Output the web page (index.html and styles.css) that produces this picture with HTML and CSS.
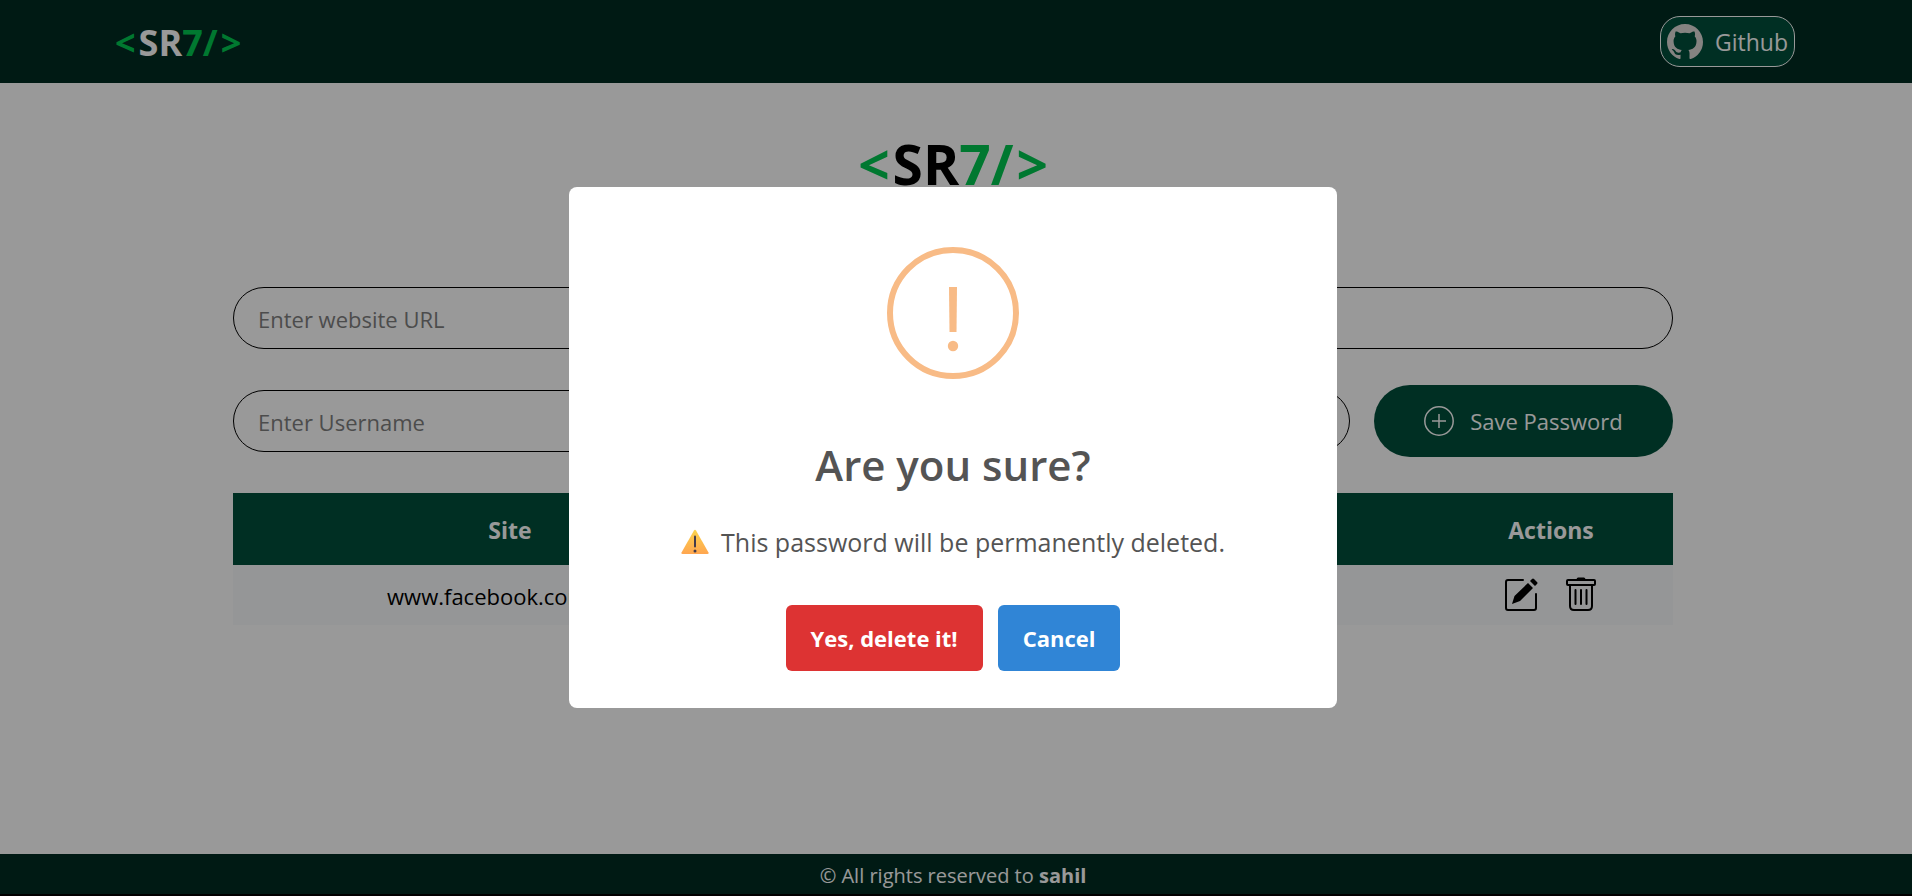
FILE: index.html
```html
<!DOCTYPE html>
<html lang="en">
<head>
<meta charset="utf-8">
<title>SR7 Password Manager</title>
<link rel="stylesheet" href="styles.css">
</head>
<body>
<nav class="nav">
  <div class="nav-inner">
    <div class="logo"><span class="green open">&lt;</span>SR<span class="green">7/</span><span class="green close">&gt;</span></div>
    <a class="github" href="#">
      <svg class="github-icon" viewBox="0 0 16 16" aria-hidden="true"><path fill="#dedad8" d="M8 0C3.580 0 0 3.580 0 8c0 3.540 2.290 6.530 5.470 7.590.4.070.55-.17.55-.38 0-.19-.01-.82-.01-1.490-2.010.37-2.530-.49-2.690-.94-.09-.23-.48-.94-.82-1.130-.28-.15-.68-.52-.01-.53.63-.01 1.080.58 1.230.82.72 1.210 1.870.87 2.330.66.070-.52.28-.87.51-1.070-1.780-.2-3.640-.89-3.640-3.950 0-.87.31-1.590.82-2.150-.08-.2-.36-1.020.08-2.120 0 0 .67-.21 2.200.82.64-.18 1.320-.27 2-.27s1.360.09 2 .27c1.530-1.040 2.200-.82 2.200-.82.44 1.100.16 1.920.08 2.120.51.56.82 1.270.82 2.150 0 3.070-1.870 3.750-3.650 3.950.29.25.54.73.54 1.480 0 1.070-.01 1.930-.01 2.200 0 .21.15.46.55.38A8.010 8.010 0 0 0 16 8c0-4.420-3.580-8-8-8z"/></svg>
      <span>Github</span>
    </a>
  </div>
</nav>
<main class="main">
  <div class="container">
  <h1 class="title"><span class="green open">&lt;</span>SR<span class="green">7/</span><span class="green close">&gt;</span></h1>
  <p class="subtitle">Your own Password Manager</p>
  <form class="form">
    <input class="field" type="text" placeholder="Enter website URL" aria-label="Website URL">
    <div class="form-row">
      <input class="field" type="text" placeholder="Enter Username" aria-label="Username">
      <input class="field" type="password" aria-label="Password">
      <button class="save" type="button">
        <svg class="plus-icon" viewBox="0 0 30 30" fill="none" stroke="currentColor" aria-hidden="true"><circle cx="15" cy="15" r="14.2" stroke-width="1.5"/><path stroke-width="1.5" d="M15 8v14M8 15h14"/></svg>
        <span>Save Password</span>
      </button>
    </div>
  </form>
  <table class="table">
    <thead>
      <tr><th class="col-site">Site</th><th>Username</th><th>Password</th><th class="col-actions">Actions</th></tr>
    </thead>
    <tbody>
      <tr>
        <td><div class="cell"><span>www.facebook.com</span><svg class="copy-icon" viewBox="0 0 24 24" fill="none" stroke="currentColor" stroke-width="2" aria-hidden="true"><rect x="8" y="8" width="13" height="13" rx="2"/><path d="M16 8V3H3v13h5"/></svg></div></td>
        <td>sahil</td>
        <td>••••••••</td>
        <td><div class="actions">
          <button class="icon-button" type="button" aria-label="Edit"><svg class="icon" viewBox="0 0 36 36" aria-hidden="true"><path fill="none" stroke="#000" stroke-width="2" stroke-linecap="round" d="M20 4H5q-2 0-2 2v26q0 2 2 2h26q2 0 2-2V18"/><path d="m9 28 2.500-8L25 7l5 5-13 13zM27 5l2-2q1-1 2 0l3 3q1 1 0 2l-2 2z"/></svg></button>
          <button class="icon-button" type="button" aria-label="Delete"><svg class="icon" viewBox="0 0 36 36" fill="none" stroke="#000" stroke-width="2" stroke-linecap="round" stroke-linejoin="round" aria-hidden="true"><rect x="4" y="4" width="28" height="5" rx="1"/><path fill="#000" d="M15 2.500h6L22 4h-8z"/><path d="M7 9v21q0 4 4 4h14q4 0 4-4V9M12.500 14v14M18 14v14M23.500 14v14"/></svg></button>
        </div></td>
      </tr>
    </tbody>
  </table>
  </div>
</main>
<footer class="footer"><p>© All rights reserved to <b>sahil</b></p></footer>
<div class="overlay">
  <div class="modal" role="dialog" aria-modal="true" aria-labelledby="dialog-title">
    <svg class="warn" viewBox="0 0 132 132" aria-hidden="true"><circle cx="66" cy="66" r="63" fill="none" stroke="#f8bb86" stroke-width="6"/><path fill="#f8bb86" d="M62 40h8l-.5 45h-7z"/><circle cx="66" cy="99" r="5.200" fill="#f8bb86"/></svg>
    <h2 class="modal-title" id="dialog-title">Are you sure?</h2>
    <p class="modal-text">
      <svg class="tri" viewBox="0 0 28 26" aria-hidden="true"><defs><linearGradient id="amber" x1="0" y1="0" x2="0" y2="1"><stop offset="0" stop-color="#fbd34d"/><stop offset="1" stop-color="#ffa650"/></linearGradient></defs><path fill="url(#amber)" d="M13 1.500q1-1.500 2 0l12.500 22q.5 1.500-1 1.500h-25q-1.500 0-1-1.500z"/><path stroke="#433b4b" stroke-width="2" stroke-linecap="round" d="M14 7.500v10"/><circle cx="14" cy="22" r="1.500" fill="#433b4b"/></svg>
      <span>This password will be permanently deleted.</span>
    </p>
    <div class="modal-actions">
      <button class="btn btn-danger" type="button">Yes, delete it!</button>
      <button class="btn btn-cancel" type="button">Cancel</button>
    </div>
  </div>
</div>
</body>
</html>
```
FILE: styles.css
```css
* { box-sizing: border-box; margin: 0; padding: 0; }
body {
  min-height: 100vh;
  display: flex;
  flex-direction: column;
  padding-bottom: 2px;
  background: linear-gradient(#000, #000) bottom / 100% 2px no-repeat #fff;
  font: 22px/36px "Open Sans", "Noto Sans", sans-serif;
  color: #000;
}
button, input { font: inherit; }
.green { color: #00c950; }
.nav { background: #002c22; color: #fff; padding: 0 117px 0 115px; }
.nav-inner { display: flex; justify-content: space-between; align-items: center; height: 83px; }
.logo { font-size: 36px; line-height: 48px; font-weight: 700; padding-top: 2px; }
.logo .open { margin-right: 3px; }
.logo .close { margin-left: 3px; }
.github {
  display: flex; align-items: center; gap: 12px;
  height: 51px; padding: 0 6px;
  border: 1px solid #fff; border-radius: 20px;
  background: #004f3b; color: #fff; text-decoration: none; font-size: 23px;
}
.github-icon { width: 36px; height: 36px; }
.main { flex: 1; padding: 42px 6px 48px 0; }
.container { width: 1440px; max-width: 90%; margin: 0 auto; }
.title { font-size: 55px; line-height: 78px; font-weight: 700; text-align: center; }
.title .open { margin-right: 3px; }
.title .close { margin-left: 3px; }
.subtitle { text-align: center; margin-bottom: 48px; }
.form { display: flex; flex-direction: column; gap: 36px; margin-bottom: 36px; }
.form-row { display: flex; align-items: center; gap: 24px; }
.field {
  width: 100%; min-width: 0; height: 62px; padding: 2px 24px 0;
  border: 1px solid #000; border-radius: 31px; background: #fff;
}
.field::placeholder { color: #7f7f7f; opacity: 1; }
.save {
  flex: none; width: 299px; height: 72px;
  display: flex; justify-content: center; align-items: center; gap: 16px;
  border: 0; border-radius: 36px; background: #004f3b; color: #fff;
}
.plus-icon { width: 30px; height: 30px; }
.table { width: 100%; border-collapse: collapse; table-layout: fixed; text-align: center; }
.table th { height: 72px; padding-top: 2px; background: #004f3b; color: #fff; font-size: 23px; font-weight: 700; }
.table td { height: 60px; background: #f8fafc; }
.col-site { width: 554px; }
.col-actions { width: 244px; }
.cell { display: flex; justify-content: center; align-items: center; gap: 15px; padding-top: 2px; }
.copy-icon { width: 30px; height: 30px; }
.actions { display: flex; justify-content: center; gap: 24px; padding-bottom: 2px; }
.icon-button { border: 0; background: none; display: flex; }
.icon { width: 36px; height: 36px; }
.footer { background: #002c22; color: #fff; text-align: center; font-size: 20px; line-height: 36px; padding: 4px 6px 0 0; }
.overlay {
  position: fixed; inset: 0; display: flex; justify-content: center; align-items: center;
  padding: 0 6px 2px 0; background: rgba(0, 0, 0, .4);
}
.modal {
  width: 768px; max-width: 90%; padding: 60px 24px 37px;
  display: flex; flex-direction: column; align-items: center;
  background: #fff; border-radius: 8px; color: #545454;
}
.warn { width: 132px; height: 132px; margin-bottom: 48px; }
.modal-title { font-size: 42px; line-height: 76px; font-weight: 600; }
.modal-text { display: flex; align-items: center; gap: 12px; margin: 12px 0 36px; font-size: 25px; line-height: 54px; }
.tri { width: 28px; height: 26px; }
.modal-actions { display: flex; gap: 15px; }
.btn { height: 66px; padding: 0 25px; border: 0; border-radius: 6px; color: #fff; font-weight: 700; }
.btn-danger { background: #dd3333; }
.btn-cancel { background: #3085d6; }
```
